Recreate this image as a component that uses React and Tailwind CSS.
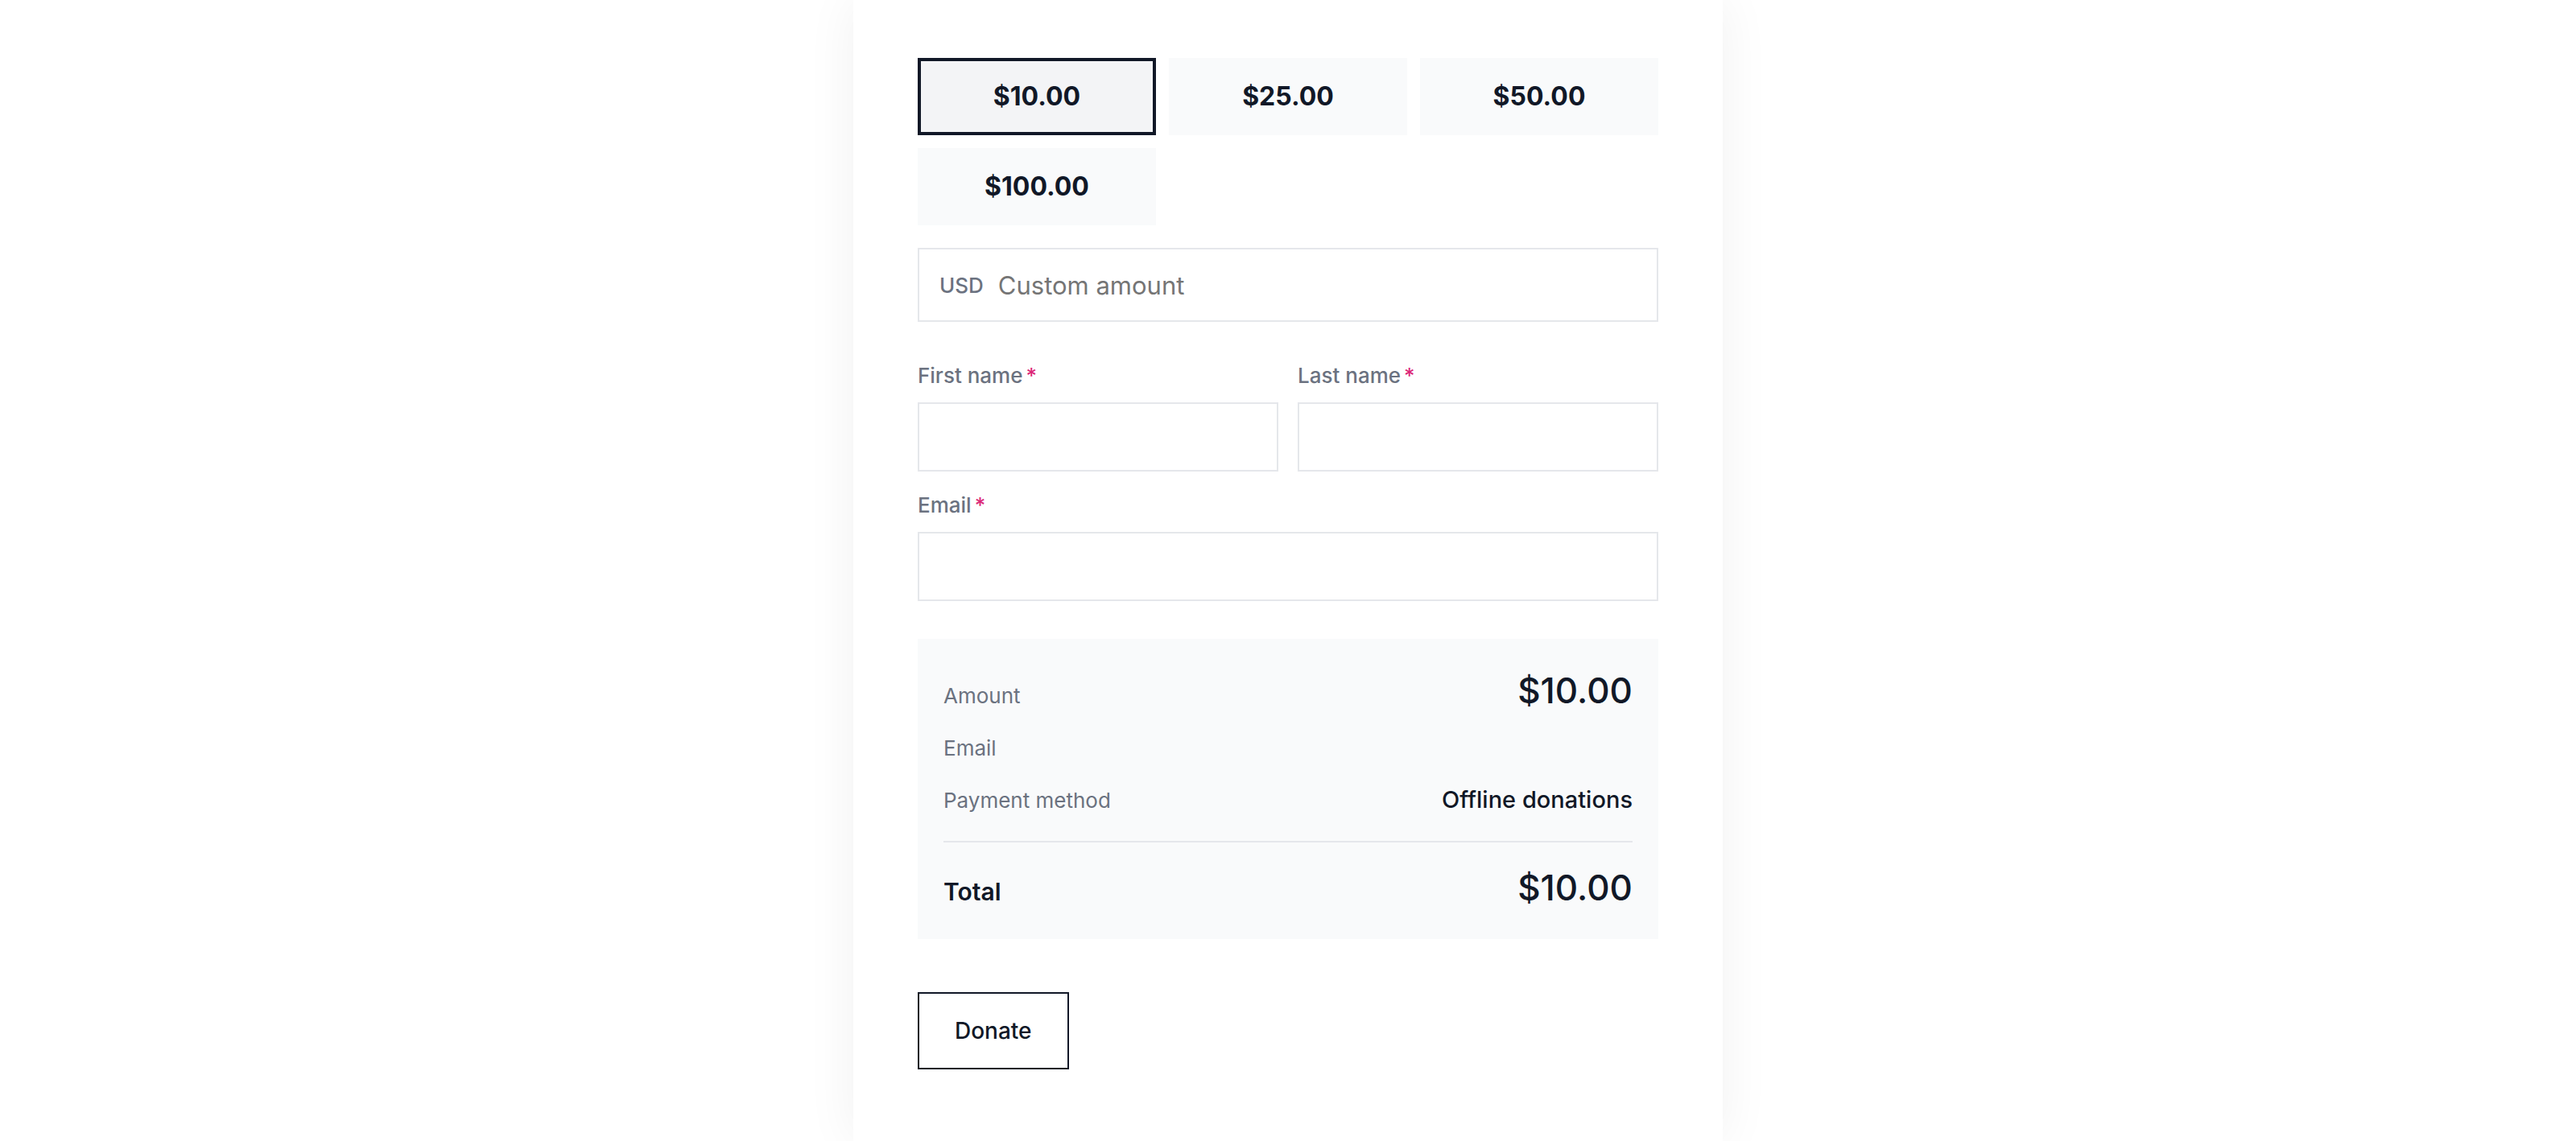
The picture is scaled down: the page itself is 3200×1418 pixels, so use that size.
import React from "react";

const presets = ["$10.00", "$25.00", "$50.00", "$100.00"];

function Field({ label, className = "" }) {
  return (
    <div className={className}>
      <label className="mb-[13px] flex items-start text-[26px] leading-[40px] font-medium text-[#6b7280]">
        {label}
        <span className="ml-[4px] text-[#db2777]">*</span>
      </label>
      <input
        type="text"
        className="block h-[86px] w-full border-2 border-[#e5e7eb] bg-white px-[24px] text-[28px] text-[#111827] outline-none"
      />
    </div>
  );
}

function Row({ label, children, className = "" }) {
  return (
    <div className={`flex items-baseline justify-between ${className}`}>
      <span className="text-[26px] leading-[40px] text-[#6b7280]">{label}</span>
      {children}
    </div>
  );
}

export default function App() {
  const selected = 0;
  return (
    <div className="flex min-h-screen justify-center bg-white font-['Inter',sans-serif]">
      <div className="w-[1080px] bg-white px-[80px] pt-[72px] pb-[88px] shadow-[0_0_60px_rgba(0,0,0,0.06)]">
        <div className="grid grid-cols-3 gap-[16px]">
          {presets.map((p, i) => (
            <button
              key={p}
              className={
                i === selected
                  ? "flex h-[96px] items-center justify-center border-4 border-[#111827] bg-[#f3f4f6] text-[32px] font-bold text-[#111827]"
                  : "flex h-[96px] items-center justify-center bg-[#f9fafb] text-[32px] font-bold text-[#111827]"
              }
            >
              {p}
            </button>
          ))}
        </div>

        <div className="mt-[28px] flex h-[92px] items-center border-2 border-[#e5e7eb] pl-[25px]">
          <span className="text-[26px] font-medium text-[#6b7280]">USD</span>
          <input
            type="text"
            placeholder="Custom amount"
            className="ml-[18px] h-full flex-1 bg-transparent text-[31px] text-[#111827] outline-none placeholder:text-[#757575]"
          />
        </div>

        <div className="mt-[47px] grid grid-cols-2 gap-[24px]">
          <Field label="First name" />
          <Field label="Last name" />
        </div>
        <Field label="Email" className="mt-[22px]" />

        <div className="mt-[47px] bg-[#f9fafb] px-[32px] pt-[36px] pb-[36px]">
          <Row label="Amount">
            <span className="text-[44px] leading-[56px] font-medium text-[#111827]">$10.00</span>
          </Row>
          <Row label="Email" className="mt-[24px]" />
          <Row label="Payment method" className="mt-[24px]">
            <span className="text-[29px] leading-[40px] font-medium text-[#111827]">Offline donations</span>
          </Row>
          <div className="mt-[30px] h-[2px] bg-[#e5e7eb]" />
          <div className="mt-[28px] flex items-baseline justify-between">
            <span className="text-[30px] font-semibold text-[#111827]">Total</span>
            <span className="text-[44px] leading-[56px] font-medium text-[#111827]">$10.00</span>
          </div>
        </div>

        <button className="mt-[66px] border-2 border-[#111827] bg-white px-[44px] py-[26px] text-[28px] leading-[40px] font-medium text-[#111827]">
          Donate
        </button>
      </div>
    </div>
  );
}
